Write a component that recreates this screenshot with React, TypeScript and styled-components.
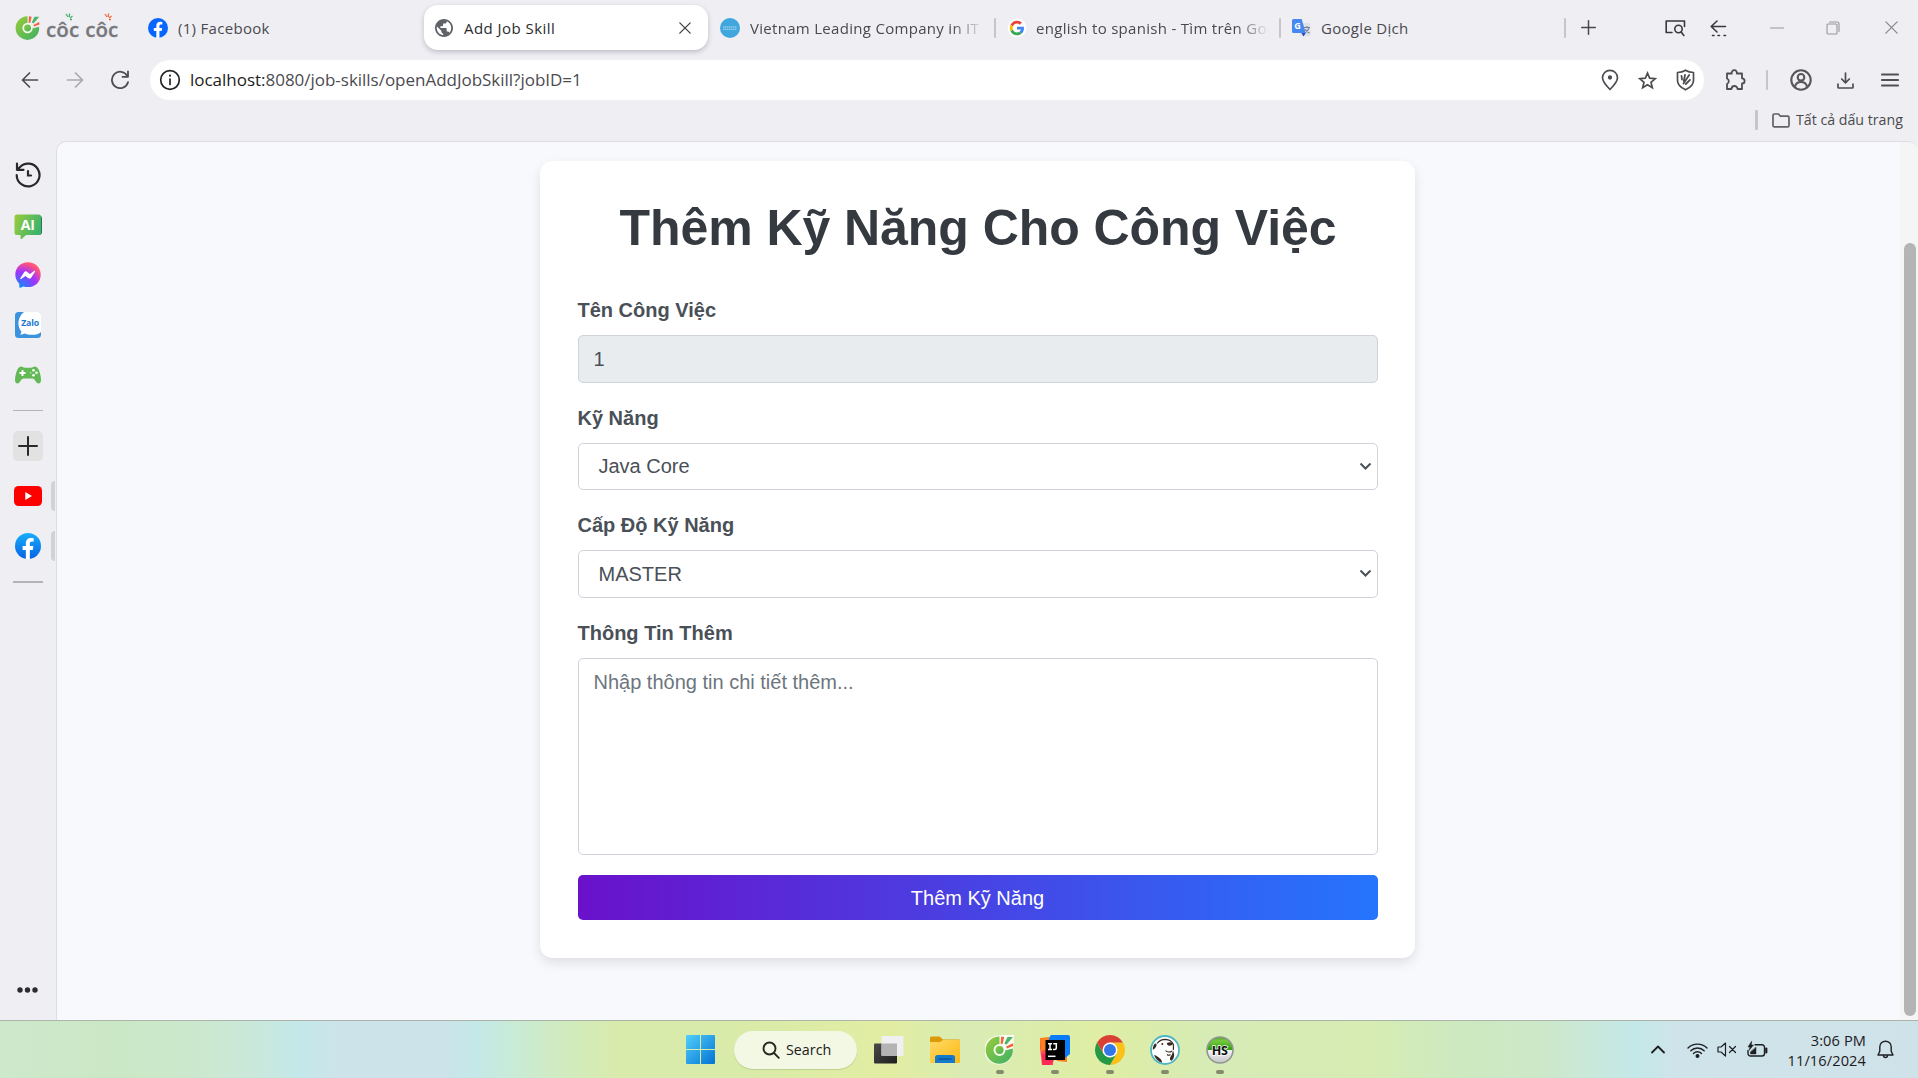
import React from "react";
import styled, { createGlobalStyle } from "styled-components";

const ui = `"Open Sans", "Noto Sans", sans-serif`;
const arial = `"Liberation Sans", Arial, sans-serif`;

const GlobalStyle = createGlobalStyle`
  *, *::before, *::after { box-sizing: border-box; }
  body { margin: 0; background: #efeef3; font-family: ${ui}; overflow: hidden; }
  svg { display: block; flex: none; }
`;

const Screen = styled.div`
  width: 1918px;
  height: 1078px;
  display: flex;
  flex-direction: column;
  overflow: hidden;
`;

const Spacer = styled.div<{ $w?: number }>`
  ${(p) => (p.$w === undefined ? "flex: 1;" : `flex: none; width: ${p.$w}px;`)}
`;

/* ---------- Browser chrome ---------- */

const TabStrip = styled.header`
  flex: none;
  height: 55px;
  display: flex;
  align-items: flex-start;
  padding-top: 5px;
`;

const Brand = styled.div`
  width: 137px;
  height: 45px;
  padding-left: 15px;
  display: flex;
  align-items: center;
`;

const Tab = styled.div<{ $active?: boolean; $width: number }>`
  flex: none;
  width: ${(p) => p.$width}px;
  height: 45px;
  padding: 0 10px 0 11px;
  display: flex;
  align-items: center;
  border-radius: 14px;
  background: ${(p) => (p.$active ? "#fff" : "transparent")};
  box-shadow: ${(p) => (p.$active ? "0 2px 5px rgba(60, 60, 80, 0.28)" : "none")};
`;

const TabTitle = styled.span<{ $space?: number; $active?: boolean; $fade?: boolean; $gap?: number }>`
  flex: 1;
  min-width: 0;
  margin-left: ${(p) => p.$gap ?? 10}px;
  overflow: hidden;
  white-space: nowrap;
  font-size: 15px;
  line-height: 22px;
  letter-spacing: ${(p) => p.$space ?? 0.3}px;
  color: ${(p) => (p.$active ? "#2b2b2e" : "#4a4a4e")};
  ${(p) => p.$fade && "mask-image: linear-gradient(90deg, #000 calc(100% - 32px), transparent);"}
`;

const Divider = styled.div<{ $h?: number; $w?: number }>`
  flex: none;
  width: ${(p) => p.$w ?? 2}px;
  height: ${(p) => p.$h ?? 20}px;
  background: #c5c5ca;
  border-radius: 1px;
`;

const StripTools = styled.div`
  flex: 1;
  height: 45px;
  display: flex;
  align-items: center;
`;

const Toolbar = styled.div`
  flex: none;
  height: 50px;
  display: flex;
  align-items: center;
`;

const AddressBar = styled.div`
  width: 1554px;
  height: 40px;
  padding: 0 9px 0 9px;
  display: flex;
  align-items: center;
  border-radius: 20px;
  background: #fff;
`;

const Url = styled.span`
  margin-left: 9px;
  font-size: 17px;
  line-height: 24px;
  letter-spacing: -0.02px;
  color: #4b4b50;
  white-space: nowrap;
  b { font-weight: 400; color: #1d1d20; }
`;

const BookmarkBar = styled.div`
  flex: none;
  height: 36px;
  padding: 0 14px 6px 0;
  display: flex;
  align-items: center;
  justify-content: flex-end;
`;

const BookmarkLabel = styled.span`
  width: 108px;
  margin-left: 6px;
  font-size: 14.2px;
  line-height: 20px;
  letter-spacing: 0;
  color: #4a4a4e;
  white-space: nowrap;
`;

/* ---------- Sidebar ---------- */

const Body = styled.div`
  flex: 1;
  min-height: 0;
  display: flex;
`;

const Sidebar = styled.nav`
  flex: none;
  width: 56px;
  padding-top: 9px;
  display: flex;
  flex-direction: column;
`;

const SideSlot = styled.div<{ $inset?: number; $drop?: number }>`
  position: relative;
  height: 50px;
  padding-right: ${(p) => p.$inset ?? 0}px;
  padding-top: ${(p) => p.$drop ?? 0}px;
  display: flex;
  align-items: center;
  justify-content: center;
`;

const OpenMark = styled.span`
  position: absolute;
  right: 1px;
  top: 10px;
  width: 4px;
  height: 30px;
  border-radius: 4px 0 0 4px;
  background: #d2d2d4;
`;

const SideRule = styled.div<{ $thick?: number }>`
  height: ${(p) => p.$thick ?? 1}px;
  margin: 10px 13px;
  background: #b4b4b6;
`;

const AddButton = styled.div`
  width: 30px;
  height: 30px;
  display: grid;
  place-items: center;
  border-radius: 5px;
  background: #e2e2e2;
`;

const SideEnd = styled.div`
  margin-top: auto;
  height: 60px;
  padding-left: 17px;
  display: flex;
  align-items: center;
`;

/* ---------- Page ---------- */

const Viewport = styled.main`
  flex: 1;
  min-width: 0;
  display: flex;
  border: 1px solid #dddde2;
  border-right: 0;
  border-bottom: 0;
  border-radius: 10px 10px 0 0;
  background: #f8f9fd;
  overflow: hidden;
`;

const PageArea = styled.div`
  flex: 1;
  padding-top: 19px;
  padding-left: 483px;
`;

const Card = styled.form`
  width: 875px;
  padding: 36.5px 37.5px 38px;
  border-radius: 12.5px;
  background: #fff;
  box-shadow: 0 5px 12px rgba(0, 0, 0, 0.1);
  font-family: ${arial};
`;

const Title = styled.h1`
  margin: 0 0 37.5px;
  padding-left: 1px;
  font-size: 50px;
  line-height: 60px;
  font-weight: 700;
  letter-spacing: -0.06px;
  text-align: center;
  white-space: nowrap;
  color: #343a40;
`;

const Label = styled.label`
  display: block;
  margin-bottom: 10px;
  font-size: 20px;
  line-height: 30px;
  font-weight: 700;
  color: #495057;
`;

const Field = styled.div<{ $disabled?: boolean; $select?: boolean }>`
  height: 47.5px;
  margin-bottom: 20px;
  padding: 0 5px 0 ${(p) => (p.$select ? 20 : 15)}px;
  display: flex;
  align-items: center;
  justify-content: space-between;
  border: 1px solid #ced4da;
  border-radius: 5px;
  background: ${(p) => (p.$disabled ? "#e9ecef" : "#fff")};
  font-size: 20px;
  line-height: 30px;
  color: #495057;
`;

const Notes = styled.textarea`
  display: block;
  width: 100%;
  height: 197px;
  margin: 0 0 20px;
  padding: 8px 15px;
  border: 1px solid #ced4da;
  border-radius: 5px;
  background: #fff;
  resize: none;
  font: 20px/30px ${arial};
  &::placeholder { color: #6c757d; opacity: 1; }
`;

const Submit = styled.button`
  display: block;
  width: 100%;
  height: 45px;
  padding: 1px 6px 0;
  border: 0;
  border-radius: 5px;
  background: linear-gradient(90deg, #6a11cb 0%, #2575fc 100%);
  color: #fff;
  font: 20px/30px ${arial};
`;

const ScrollTrack = styled.div`
  width: 18px;
  padding: 101px 2px 4px 4px;
  background: #f5f5f6;
`;

const ScrollThumb = styled.div`
  height: 100%;
  border-radius: 6px;
  background: #b4b4b5;
`;

/* ---------- Taskbar ---------- */

const Taskbar = styled.footer`
  flex: none;
  height: 58px;
  padding-left: 686px;
  display: flex;
  align-items: center;
  border-top: 1px solid #abb5a9;
  background: linear-gradient(90deg,
    #cde8cb 0, #cbe8c5 120px, #cbe8d0 210px, #c9e8dc 260px, #c3e8ea 300px, #cce4e9 335px,
    #cce3e9 445px, #c3e8e8 475px, #c8ebd8 510px, #d0ebc0 560px, #d9ebab 620px, #d9eba9 740px,
    #e2eda2 890px, #d9ecb4 970px, #dfeea3 1100px, #d6ebb6 1210px, #d6ecb2 1370px, #cde9c0 1460px,
    #cce8c8 1540px, #c9e8da 1590px, #c3e8e8 1635px, #cfe4ea 1675px, #cfe2e9 1918px);
`;

const SearchPill = styled.div`
  width: 123px;
  height: 38px;
  margin: 0 17px 0 19px;
  padding-left: 28px;
  display: flex;
  align-items: center;
  gap: 6px;
  border-radius: 19px;
  background: #f3f8e5;
  box-shadow: 0 1px 1px rgba(100, 120, 60, 0.25);
  font-size: 14.3px;
  color: #202020;
`;

const AppSlot = styled.div<{ $running?: boolean }>`
  position: relative;
  flex: none;
  width: 55px;
  height: 57px;
  display: grid;
  place-items: center;
  &::after {
    content: "";
    display: ${(p) => (p.$running ? "block" : "none")};
    position: absolute;
    left: 23.5px;
    bottom: 4px;
    width: 8px;
    height: 4px;
    border-radius: 2px;
    background: #838b6c;
  }
`;

const Clock = styled.div`
  width: 90px;
  margin-right: 11px;
  text-align: right;
  font-size: 14.6px;
  line-height: 20px;
  letter-spacing: 0.1px;
  white-space: nowrap;
  color: #1c2022;
`;

/* ---------- Icons ---------- */

type LineProps = {
  w: number;
  h?: number;
  box: string;
  color?: string;
  stroke?: number;
  children: React.ReactNode;
};

const Line = ({ w, h, box, color = "#4d4d52", stroke = 1.6, children }: LineProps) => (
  <svg width={w} height={h ?? w} viewBox={box} fill="none" stroke={color} strokeWidth={stroke} strokeLinecap="round" strokeLinejoin="round">
    {children}
  </svg>
);

const CocCocMark = ({ size, outline, id }: { size: number; outline?: boolean; id: string }) => (
  <svg width={size} height={size} viewBox="0 0 30 30">
    <defs>
      <linearGradient id={id} x1="0" y1="0" x2="1" y2="1">
        <stop offset="0" stopColor="#9acb3a" />
        <stop offset="1" stopColor="#3cb166" />
      </linearGradient>
    </defs>
    {outline && (
      <path d="M14 0.5a14.5 14.5 0 1 0 14 17L29 0 17 0z" fill="#fff" opacity="0.85" />
    )}
    <path d="M14.5 1.5A13.6 13.6 0 1 0 27.8 13.5L21 15.2 14.5 9.5z" fill={`url(#${id})`} />
    <circle cx="14.5" cy="15" r="5" fill={`url(#${id})`} stroke="#f5fbe9" strokeWidth="2" />
    <path d="M16.2 1.5l3 .6-1.6 7-2-.4z" fill="#f4633a" />
    <path d="M22.5 2h5.5l-6.6 7.8-2-1.4z" fill="#4db56a" />
    <path d="M27.8 8.2l.5 2.9-6.5 2.3-.6-1.9z" fill="#f4633a" />
  </svg>
);

const Wordmark = styled.span`
  display: flex;
  gap: 6px;
  margin-left: 5px;
  font: 600 20.5px/30px ${ui};
  letter-spacing: 0.1px;
  color: #77787c;
  -webkit-text-stroke: 0.3px #77787c;
`;

const Word = styled.span`
  position: relative;
  transform: translateY(1px);
`;

const Accent = styled.svg`
  position: absolute;
  left: 19px;
  top: -1px;
`;

const CocCocLogo = () => (
  <Brand>
    <CocCocMark size={26} id="cc-logo" />
    <Wordmark>
      {["#3fb56b", "#f2683f"].map((c) => (
        <Word key={c}>
          côc
          <Accent width="8" height="8" viewBox="0 0 8 8" stroke={c} strokeWidth="1.3" fill="none">
            <path d="M1 1l2 3M4.5.5L4.300 4M7.500 3L5 5M7 6.500L5 6.500" />
          </Accent>
        </Word>
      ))}
    </Wordmark>
  </Brand>
);

const FacebookIcon = ({ size, id }: { size: number; id: string }) => (
  <svg width={size} height={size} viewBox="0 0 24 24">
    <defs>
      <linearGradient id={id} x1="0" y1="0" x2="0" y2="1">
        <stop offset="0" stopColor={id === "fb-tab" ? "#0866ff" : "#19aefb"} />
        <stop offset="1" stopColor={id === "fb-tab" ? "#0866ff" : "#0663e2"} />
      </linearGradient>
    </defs>
    <circle cx="12" cy="12" r="12" fill={`url(#${id})`} />
    <path d="M10 23.9v-8.3H7V12h3V9.5c0-3.1 1.8-4.9 4.6-4.9 1 0 2 .1 2.6.3v3h-1.500c-1.600 0-2 .8-2 1.800V12h3.300l-.6 3.600h-2.700v8.300z" fill="#fff" />
  </svg>
);

const GlobeIcon = () => (
  <svg width="18" height="18" viewBox="2 2 20 20">
    <path fill="#5f6368" d="M12 2C6.480 2 2 6.480 2 12s4.480 10 10 10 10-4.480 10-10S17.520 2 12 2zm-1 17.930c-3.950-.49-7-3.850-7-7.930 0-.62.080-1.210.210-1.790L9 15v1c0 1.100.9 2 2 2v1.930zm6.900-2.540c-.26-.81-1-1.390-1.900-1.390h-1v-3c0-.55-.45-1-1-1H8v-2h2c.55 0 1-.45 1-1V7h2c1.100 0 2-.9 2-2v-.41c2.930 1.190 5 4.060 5 7.410 0 2.080-.8 3.970-2.100 5.390z" />
  </svg>
);

const SiteIcon = () => (
  <svg width="20" height="20" viewBox="0 0 20 20">
    <circle cx="10" cy="10" r="10" fill="#3fa7de" />
    <path d="M3 9h14M3 11.300h14" stroke="#b4dcf2" strokeWidth="1.100" strokeDasharray="1.500 .5" />
  </svg>
);

const GoogleIcon = () => (
  <svg width="20" height="20" viewBox="-9 -9 66 66">
    <circle cx="24" cy="24" r="31" fill="#fff" />
    <path fill="#EA4335" d="M24 9.500c3.540 0 6.710 1.220 9.210 3.600l6.850-6.850C35.900 2.380 30.470 0 24 0 14.620 0 6.510 5.380 2.560 13.220l7.980 6.190C12.430 13.720 17.740 9.500 24 9.500z" />
    <path fill="#4285F4" d="M46.980 24.550c0-1.570-.15-3.090-.38-4.550H24v9.020h12.940c-.58 2.960-2.260 5.480-4.780 7.180l7.730 6c4.510-4.180 7.090-10.360 7.090-17.650z" />
    <path fill="#FBBC05" d="M10.530 28.590c-.48-1.450-.76-2.990-.76-4.590s.27-3.140.76-4.590l-7.980-6.190C.92 16.460 0 20.120 0 24s.92 7.540 2.560 10.780l7.970-6.190z" />
    <path fill="#34A853" d="M24 48c6.480 0 11.930-2.130 15.890-5.810l-7.730-6c-2.150 1.450-4.920 2.300-8.160 2.300-6.260 0-11.570-4.220-13.470-9.910l-7.980 6.190C6.510 42.620 14.620 48 24 48z" />
  </svg>
);

const Glyph = styled.text`
  font-family: ${ui};
  font-weight: 700;
`;

const TranslateIcon = () => (
  <svg width="20" height="20" viewBox="0 0 20 20">
    <rect x="8" y="5" width="10.500" height="13" rx="1.500" fill="#dfe1e5" />
    <path d="M12 9.500h6M15 8v1.500M17 9.500c-.5 2.500-2.500 4.500-4.500 5.500M13 11c1 2 2.500 3.200 4.500 4" stroke="#6e8596" strokeWidth="1.100" fill="none" />
    <path d="M1.500 1h8.200l4 14H1.500A1.500 1.500 0 0 1 0 13.500v-11A1.500 1.500 0 0 1 1.500 1z" fill="#4688f1" />
    <path d="M9.500 15h4.200l-2.200 3.500z" fill="#2a49b8" />
    <Glyph x="2.300" y="11" fontSize="9" fill="#fff">G</Glyph>
  </svg>
);

const CloseIcon = ({ size, color }: { size: number; color: string }) => (
  <Line w={size} box="0 0 12 12" color={color} stroke={1.200}>
    <path d="M.8.8l10.400 10.400M11.200.8L.8 11.200" />
  </Line>
);

const PlusIcon = ({ size, stroke, color }: { size: number; stroke: number; color: string }) => (
  <Line w={size} box="0 0 20 20" stroke={stroke} color={color}>
    <path d="M10 1v18M1 10h18" />
  </Line>
);

const ArrowLeft = () => (
  <Line w={18} box="0 0 18 18" stroke={1.700}>
    <path d="M16.500 9H1.500M8.500 2L1.500 9l7 7" />
  </Line>
);

const ArrowRight = () => (
  <Line w={18} box="0 0 18 18" stroke={1.700} color="#a9a9ae">
    <path d="M1.500 9h15M9.500 2l7 7-7 7" />
  </Line>
);

const ReloadIcon = () => (
  <Line w={20} box="0 0 20 20" stroke={1.800}>
    <path d="M18 12.200A8.200 8.200 0 1 1 17.200 5.800M18 1.500v5.300h-5.500" />
  </Line>
);

const InfoIcon = () => (
  <Line w={22} box="0 0 22 22" color="#232326" stroke={1.700}>
    <circle cx="11" cy="11" r="9.300" />
    <path d="M11 10v5.500" />
    <path d="M11 6.500v.2" strokeWidth="2" />
  </Line>
);

const PinIcon = () => (
  <Line w={18} h={22} box="0 0 18 22" stroke={1.700}>
    <path d="M9 20.500C5 16.500 1.500 13 1.500 8.800a7.500 7.500 0 0 1 15 0c0 4.200-3.500 7.700-7.500 11.700z" />
    <circle cx="9" cy="8.500" r="1.300" fill="#4d4d52" />
  </Line>
);

const StarIcon = () => (
  <Line w={19} box="0 0 20 20" stroke={1.800}>
    <path strokeLinejoin="miter" d="M10 2.200l2.300 5.400 5.900.5-4.500 3.900 1.400 5.700L10 14.600l-5.100 3.100 1.400-5.700-4.500-3.900 5.900-.5z" />
  </Line>
);

const ShieldIcon = () => (
  <Line w={19} h={22} box="0 0 19 22" stroke={1.700}>
    <path d="M9.500 1.200C7 3 4 3.500 1.500 3.500v8c0 4 3.500 7.200 8 9.300 4.500-2.100 8-5.300 8-9.300v-8c-2.500 0-5.500-.5-8-2.300z" />
    <path strokeWidth="1.800" d="M5.500 6.800l.5 3.700M9 6l-1.200 6M13.200 6L7.500 14.500M14 10.800l-4.200 4.200" />
  </Line>
);

const PuzzleIcon = () => (
  <Line w={21} h={22} box="0 0 21 22" stroke={1.800}>
    <path d="M2 4.500h4.800a2.600 2.600 0 1 1 5 0H17v4.800a2.600 2.600 0 1 1 0 5.200V20h-4.500a3 3 0 0 0-6 0H2v-5a3 3 0 0 0 0-5.500z" />
  </Line>
);

const ProfileIcon = () => (
  <Line w={22} box="0 0 22 22" stroke={2.100} color="#56565b">
    <circle cx="11" cy="11" r="9.700" />
    <circle cx="11" cy="8.300" r="3.300" />
    <path d="M5 17.500c.8-3.200 3-4.500 6-4.500s5.200 1.300 6 4.500" />
  </Line>
);

const DownloadIcon = () => (
  <Line w={17} h={17} box="0 0 17 17" stroke={1.700}>
    <path d="M8.500 1v9.500M4.700 7l3.800 3.800L12.300 7M1 12v3.200c0 .5.300.8.800.8h13.400c.5 0 .8-.3.800-.8V12" />
  </Line>
);

const MenuIcon = () => (
  <Line w={18} h={14} box="0 0 18 14" stroke={1.800} color="#505055">
    <path d="M.8 1.500h16.400M.8 7h16.400M.8 12.500h16.400" />
  </Line>
);

const TabSearchIcon = () => (
  <Line w={21} h={18} box="0 0 21 18" stroke={1.600} color="#39393d">
    <path d="M7 13.500H1.200V2h18.300v5.500" />
    <circle cx="13.500" cy="10" r="3.700" />
    <path d="M16.200 13l2.600 3.500" />
  </Line>
);

const BackDashIcon = () => (
  <Line w={17} h={18} box="0 0 17 18" stroke={1.600} color="#39393d">
    <path d="M15.500 7.500H1.200M7 2L1.200 7.500 7 13M2.500 16.500h1.500M8 16.500h1.500M14 16.500h1.500" />
  </Line>
);

const MaximizeIcon = () => (
  <Line w={14} h={14} box="0 0 14 14" stroke={1.100} color="#98989c">
    <rect x="1" y="3" width="10" height="10" rx="1" />
    <path d="M3.500 1H11a2 2 0 0 1 2 2v7.500" />
  </Line>
);

const FolderIcon = () => (
  <Line w={18} h={15} box="0 0 18 15" stroke={1.700} color="#616166">
    <path d="M1 2.500C1 1.700 1.500 1 2.300 1h4.200l2 2.200h7.200c.8 0 1.300.6 1.300 1.300v8c0 .8-.5 1.400-1.300 1.400H2.300c-.8 0-1.300-.6-1.300-1.400z" />
  </Line>
);

const HistoryIcon = () => (
  <Line w={26} box="0 0 26 26" stroke={2.200} color="#29292b">
    <path d="M1.700 13.200A11.400 11.400 0 1 0 4.800 5.200L2 7.800M2 1.500v6.300h6.500" />
    <path d="M13 9v4.500h3" strokeLinejoin="miter" />
  </Line>
);

const AiIcon = () => (
  <svg width="28" height="25" viewBox="0 0 28 25">
    <defs>
      <linearGradient id="ai" x1="0" y1="0" x2="1" y2=".4">
        <stop offset="0" stopColor="#9ccc3c" />
        <stop offset="1" stopColor="#3fb36b" />
      </linearGradient>
    </defs>
    <path d="M25 1.500a3 3 0 0 1 3 3V18a3 3 0 0 1-3 3z" fill="#23785a" />
    <path d="M3 .5h21.500a2.500 2.500 0 0 1 2.500 2.500v15.500a2.500 2.500 0 0 1-2.500 2.500H12l-4 3.800c-.8.500-1.500.1-1.500-.8v-3H3A2.500 2.500 0 0 1 .5 18.500V3A2.500 2.500 0 0 1 3 .5z" fill="url(#ai)" />
    <Glyph x="6.700" y="15.500" fontSize="14" fill="#fff">AI</Glyph>
  </svg>
);

const MessengerIcon = () => (
  <svg width="26" height="26" viewBox="0 0 26 26">
    <defs>
      <radialGradient id="msg" cx=".2" cy="1" r="1.150">
        <stop offset="0" stopColor="#0a8cff" />
        <stop offset=".55" stopColor="#a033ff" />
        <stop offset=".85" stopColor="#ff5280" />
        <stop offset="1" stopColor="#ff7061" />
      </radialGradient>
    </defs>
    <path d="M13 .3C5.800.3.300 5.500.300 12.600c0 3.700 1.500 6.900 4 9.100v3.200c0 .6.600 1 1.200.8l2.700-1.200c1.500.4 3.100.6 4.800.6 7.200 0 12.700-5.200 12.700-12.400S20.200.3 13 .3z" fill="url(#msg)" />
    <path d="M5.300 16.200l3.800-6c.6-.9 1.900-1.200 2.800-.5l3 2.200 4.200-2.900c.6-.4 1.300.2.900.8l-3.800 5.900c-.6.900-1.900 1.200-2.800.5l-3-2.200-4.200 3c-.600.400-1.300-.200-.900-.800z" fill="#fff" />
  </svg>
);

const ZaloIcon = () => (
  <svg width="26" height="26" viewBox="0 0 26 26">
    <rect width="26" height="26" rx="3.500" fill="#3b92dd" />
    <path d="M9 0h14a3 3 0 0 1 3 3v17c-3 3.500-12 3.500-16.500 1.500-1.500 1-3 1.300-4.500 1 1-.8 1.500-1.800 1.300-3C1.800 14 2.500 5 9 0z" fill="#fff" />
    <Glyph x="6.200" y="14" fontSize="8.800" letterSpacing="-0.200" fill="#1f78d1">Zalo</Glyph>
  </svg>
);

const GameIcon = () => (
  <svg width="26" height="18" viewBox="0 0 26 18">
    <path d="M6 .5c2 0 2.500 1.300 4 1.300h6c1.500 0 2-1.300 4-1.300 4 0 6 9.500 6 13.500 0 2.300-1 3.500-2.500 3.500-2.500 0-3.500-5-6-5h-9c-2.500 0-3.500 5-6 5C1 17.500 0 16.300 0 14 0 10 2 .5 6 .5z" fill="#62b955" />
    <path d="M7.500 4v6M4.500 7h6" stroke="#fff" strokeWidth="1.900" />
    <circle cx="18.500" cy="4.300" r="1.300" fill="#fff" />
    <circle cx="18.500" cy="9.300" r="1.300" fill="#fff" />
    <circle cx="21.500" cy="6.800" r="1.300" fill="#fff" />
    <circle cx="15.700" cy="6.800" r="1" fill="#a5d89b" />
  </svg>
);

const YoutubeIcon = () => (
  <svg width="28" height="20" viewBox="0 0 28 20">
    <rect width="28" height="20" rx="4.500" fill="#fe0000" />
    <path d="M11.300 6l6.700 4-6.700 4z" fill="#fff" />
  </svg>
);

const DotsIcon = () => (
  <svg width="21" height="6" viewBox="0 0 21 6" fill="#2b2b2d">
    <circle cx="3" cy="3" r="2.700" />
    <circle cx="10.500" cy="3" r="2.700" />
    <circle cx="18" cy="3" r="2.700" />
  </svg>
);

const SelectArrow = () => (
  <Line w={13} h={7} box="0 1 13 7" stroke={2} color="#495057">
    <path strokeLinecap="butt" strokeLinejoin="miter" d="M1.500 1.500l5 5 5-5" />
  </Line>
);

const WindowsIcon = () => (
  <svg width="29" height="29" viewBox="0 0 29 29">
    <defs>
      <linearGradient id="win" x1="0" y1="0" x2="1" y2="1">
        <stop offset="0" stopColor="#52d0fb" />
        <stop offset="1" stopColor="#0372d2" />
      </linearGradient>
    </defs>
    <path fill="url(#win)" d="M1 0h13v14H0V1a1 1 0 0 1 1-1zM15 0h13a1 1 0 0 1 1 1v13H15zM0 15h14v14H1a1 1 0 0 1-1-1zM15 15h14v13a1 1 0 0 1-1 1H15z" />
  </svg>
);

const SearchIcon = () => (
  <Line w={18} box="0 0 18 18" stroke={1.900} color="#26291f">
    <circle cx="7.500" cy="7.500" r="6" />
    <path d="M12 12l4.800 4.800" />
  </Line>
);

const TaskViewIcon = () => (
  <svg width="30" height="29" viewBox="0 0 30 29">
    <defs>
      <linearGradient id="tv" x1="0" y1="0" x2="1" y2="1">
        <stop offset="0" stopColor="#4a4a4a" />
        <stop offset="1" stopColor="#1f1f1f" />
      </linearGradient>
    </defs>
    <rect x="0" y="8.500" width="23" height="20" rx="1" fill="url(#tv)" />
    <rect x="7.500" y="1" width="22" height="20" rx="1" fill="#f0f0f2" />
    <path d="M7.500 8.500H23V21H8.500a1 1 0 0 1-1-1z" fill="#b4b4b4" />
  </svg>
);

const ExplorerIcon = () => (
  <svg width="30" height="28" viewBox="0 0 30 28">
    <defs>
      <linearGradient id="ex" x1="0" y1="0" x2="1" y2="1">
        <stop offset="0" stopColor="#ffd966" />
        <stop offset="1" stopColor="#fdb913" />
      </linearGradient>
    </defs>
    <path d="M0 2a1.500 1.500 0 0 1 1.500-1.500h8L13 3.500h16a1 1 0 0 1 1 1V10H0z" fill="#dd9a08" />
    <path d="M0 6h10l3-2h16a1 1 0 0 1 1 1v21a1 1 0 0 1-1 1H1a1 1 0 0 1-1-1z" fill="url(#ex)" />
    <path d="M5 27v-5.500A2.500 2.500 0 0 1 7.500 19h15a2.500 2.500 0 0 1 2.500 2.500V27z" fill="#1579cc" />
    <path d="M8.500 23h13" stroke="#0a4d8f" strokeWidth="1.200" />
  </svg>
);

const IntellijIcon = () => (
  <svg width="30" height="30" viewBox="0 0 30 30">
    <path d="M0 4l8-1 6 12-1 15H2L0 13z" fill="#fc4a54" />
    <path d="M0 3l9-1 3 8-11 7z" fill="#fc801d" />
    <path d="M2 19h12v6l-4 5H2z" fill="#fe2857" />
    <path d="M15 20h12v7l-10-1z" fill="#fc801d" />
    <path d="M11 0h17a2 2 0 0 1 2 2v17l-5 4-16-12V3z" fill="#087cfa" />
    <rect x="5.500" y="5" width="19.500" height="20" />
    <path d="M8 8.800h4M10 8.800v5.700M8 14.500h4M13.300 8.800h3v4.200c0 1-.6 1.500-1.500 1.500H13" stroke="#fff" strokeWidth="1.500" fill="none" />
    <path d="M8 21.300h7.500" stroke="#fff" strokeWidth="1.500" />
  </svg>
);

const ChromeIcon = () => (
  <svg width="30" height="30" viewBox="0 0 48 48">
    <path d="M24 12h20.780A24 24 0 0 1 24 48l10.400-18z" fill="#fbc116" />
    <path d="M13.600 30L3.220 12A24 24 0 0 0 24 48l10.400-18z" fill="#249a47" />
    <path d="M24 12h20.780A24 24 0 0 0 3.220 12l10.400 18z" fill="#d93f32" />
    <circle cx="24" cy="24" r="12" fill="#fff" />
    <circle cx="24" cy="24" r="9.600" fill="#3277e8" />
  </svg>
);

const DBeaverIcon = () => (
  <svg width="30" height="30" viewBox="0 0 30 30">
    <circle cx="15" cy="15" r="14" fill="#fff" stroke="#4fb7c4" strokeWidth="1.800" />
    <path d="M7 8.500c2-2.800 5-4.200 8.500-4.200 3.500.2 6.500 2 7.800 5 .6 2-.3 3.700.2 5.700" fill="none" stroke="#382923" strokeWidth="1.200" />
    <path d="M4.500 9c-1.500 2-1.800 4-1.600 5.800C4 14.500 6 12.500 6.500 10.500 7 9 5.500 7.800 4.500 9z" fill="#382923" />
    <path d="M4 20c2.500.5 4.500 2 6 3.500 1.500 1.300 2 2.500 2 4.200C8.500 26.800 5.500 24 4 20zM17 8c2-1.200 4.500-1 5.800.8-.3 2-4.300 2.700-5.500 1-.4-.7-.5-1.200-.3-1.800zM23 15.500c1 2.500 2.500 7-1.500 10.300-1.800-.3-2-3-.5-4.800 1.500-1.700 1.300-3.700 2-5.500z" fill="#382923" />
    <circle cx="12.300" cy="9" r="1" fill="#382923" />
    <path d="M15.500 15.500c1.500 2 4.500 2 6.500.5M17 19.500c1 .8 2.500.8 3.500 0" stroke="#382923" strokeWidth="1.100" fill="none" />
  </svg>
);

const HeidiIcon = () => (
  <svg width="28" height="28" viewBox="0 0 28 28">
    <defs>
      <linearGradient id="hs" x1="0" y1="0" x2="0" y2="1">
        <stop offset="0" stopColor="#53a52b" />
        <stop offset=".15" stopColor="#74c93d" />
        <stop offset=".5" stopColor="#2f9a12" />
        <stop offset=".51" stopColor="#f4f4f4" />
        <stop offset="1" stopColor="#c4c4c4" />
      </linearGradient>
    </defs>
    <circle cx="14" cy="14" r="13" fill="url(#hs)" stroke="#8f9690" strokeWidth="1.600" />
    <Glyph x="5.700" y="18.600" fontSize="12.500" letterSpacing="-0.300" stroke="#fff" strokeWidth="1.300" paintOrder="stroke" fill="#111">HS</Glyph>
  </svg>
);

const TrayChevron = () => (
  <Line w={14} h={9} box="0 0 14 9" stroke={1.800} color="#1c2022">
    <path d="M1 7.500l6-6 6 6" />
  </Line>
);

const WifiIcon = () => (
  <Line w={21} h={16} box="0 0 21 16" stroke={1.400} color="#1c2022">
    <path d="M1 6a13.500 13.500 0 0 1 19 0M3.800 8.700a9.600 9.600 0 0 1 13.400 0M6.500 11.400a5.700 5.700 0 0 1 8 0" />
    <circle cx="10.500" cy="14" r="1.300" fill="#1c2022" />
  </Line>
);

const MuteIcon = () => (
  <Line w={20} h={15} box="0 0 20 15" stroke={1.200} color="#1c2022">
    <path d="M1 5v5h3l4.500 4V1L4 5zM12.500 4.500l6 6M18.500 4.500l-6 6" />
  </Line>
);

const BatteryIcon = () => (
  <Line w={21} h={17} box="0 0 21 17" stroke={1.400} color="#1c2022">
    <path d="M8 3.800H15a2.500 2.500 0 0 1 2.500 2.500v6.200a2.500 2.500 0 0 1-2.500 2.500H3.500A2.500 2.500 0 0 1 1 12.500V9.500" />
    <path d="M19.300 7.500v4" strokeWidth="2.200" />
    <path d="M9 6.500v6.500H3.500V11z" fill="#1c2022" strokeWidth=".5" />
    <path d="M4.500 .5L1 6h2L2 9.500 6.500 4H4.500z" fill="#1c2022" strokeWidth=".5" />
  </Line>
);

const BellIcon = () => (
  <Line w={17} h={19} box="0 0 17 19" stroke={1.400} color="#1c2022">
    <path d="M8.500 1.200a5.700 5.700 0 0 0-5.700 5.700v4.300L1 15h15l-1.800-3.800V6.900a5.700 5.700 0 0 0-5.700-5.700zM6.500 15.500a2 2 0 0 0 4 0" />
  </Line>
);

/* ---------- App ---------- */

const BrowserHeader = () => (
  <>
    <TabStrip>
      <CocCocLogo />
      <Tab $width={287}>
        <FacebookIcon size={20} id="fb-tab" />
        <TabTitle>(1) Facebook</TabTitle>
      </Tab>
      <Tab $active $width={284}>
        <GlobeIcon />
        <TabTitle $active $gap={11} $space={0.45}>Add Job Skill</TabTitle>
        <CloseIcon size={12} color="#39393d" />
        <Spacer $w={7} />
      </Tab>
      <Tab $width={286}>
        <Spacer $w={1} />
        <SiteIcon />
        <TabTitle $fade>Vietnam Leading Company in IT</TabTitle>
      </Tab>
      <StripTools>
        <Divider />
        <Tab $width={283}>
          <GoogleIcon />
          <TabTitle $fade $gap={9}>english to spanish - Tìm trên Google</TabTitle>
        </Tab>
        <Divider />
        <Tab $width={283}>
          <TranslateIcon />
          <TabTitle $gap={9}>Google Dịch</TabTitle>
        </Tab>
        <Divider />
        <Spacer $w={15} />
        <PlusIcon size={15} stroke={2} color="#48484c" />
        <Spacer />
        <TabSearchIcon />
        <Spacer $w={24} />
        <BackDashIcon />
        <Spacer $w={43} />
        <Line w={14} h={2} box="0 0 14 2" stroke={1.200} color="#98989c"><path d="M.5 1h13" /></Line>
        <Spacer $w={42} />
        <MaximizeIcon />
        <Spacer $w={45} />
        <CloseIcon size={13} color="#88888c" />
        <Spacer $w={20} />
      </StripTools>
    </TabStrip>
    <Toolbar>
      <Spacer $w={21} />
      <ArrowLeft />
      <Spacer $w={27} />
      <ArrowRight />
      <Spacer $w={26} />
      <ReloadIcon />
      <Spacer $w={20} />
      <AddressBar>
        <InfoIcon />
        <Url><b>localhost:</b>8080/job-skills/openAddJobSkill?jobID=1</Url>
        <Spacer />
        <PinIcon />
        <Spacer $w={19} />
        <StarIcon />
        <Spacer $w={19} />
        <ShieldIcon />
      </AddressBar>
      <Spacer $w={21} />
      <PuzzleIcon />
      <Spacer $w={20} />
      <Divider />
      <Spacer $w={22} />
      <ProfileIcon />
      <Spacer $w={25} />
      <DownloadIcon />
      <Spacer $w={27} />
      <MenuIcon />
    </Toolbar>
    <BookmarkBar>
      <Divider $w={3} />
      <Spacer $w={14} />
      <FolderIcon />
      <BookmarkLabel>Tất cả dấu trang</BookmarkLabel>
    </BookmarkBar>
  </>
);

const SideNav = () => (
  <Sidebar>
    <SideSlot $inset={1}><HistoryIcon /></SideSlot>
    <SideSlot $drop={2}><AiIcon /></SideSlot>
    <SideSlot><MessengerIcon /></SideSlot>
    <SideSlot><ZaloIcon /></SideSlot>
    <SideSlot><GameIcon /></SideSlot>
    <SideRule />
    <SideSlot $inset={1}>
      <AddButton><PlusIcon size={20} stroke={2} color="#29292b" /></AddButton>
    </SideSlot>
    <SideSlot><YoutubeIcon /><OpenMark /></SideSlot>
    <SideSlot><FacebookIcon size={26} id="fb-side" /><OpenMark /></SideSlot>
    <SideRule $thick={2} />
    <SideEnd><DotsIcon /></SideEnd>
  </Sidebar>
);

const SkillForm = () => (
  <Card>
    <Title>Thêm Kỹ Năng Cho Công Việc</Title>
    <Label>Tên Công Việc</Label>
    <Field $disabled>1</Field>
    <Label>Kỹ Năng</Label>
    <Field $select>Java Core<SelectArrow /></Field>
    <Label>Cấp Độ Kỹ Năng</Label>
    <Field $select>MASTER<SelectArrow /></Field>
    <Label>Thông Tin Thêm</Label>
    <Notes placeholder="Nhập thông tin chi tiết thêm..." />
    <Submit type="button">Thêm Kỹ Năng</Submit>
  </Card>
);

const SystemTaskbar = () => (
  <Taskbar>
    <WindowsIcon />
    <SearchPill><SearchIcon />Search</SearchPill>
    <TaskViewIcon />
    <Spacer $w={13} />
    <AppSlot><ExplorerIcon /></AppSlot>
    <AppSlot $running><CocCocMark size={30} outline id="cc-task" /></AppSlot>
    <AppSlot $running><IntellijIcon /></AppSlot>
    <AppSlot $running><ChromeIcon /></AppSlot>
    <AppSlot $running><DBeaverIcon /></AppSlot>
    <AppSlot $running><HeidiIcon /></AppSlot>
    <Spacer />
    <TrayChevron />
    <Spacer $w={22} />
    <WifiIcon />
    <Spacer $w={9} />
    <MuteIcon />
    <Spacer $w={10} />
    <BatteryIcon />
    <Spacer $w={8} />
    <Clock>3:06 PM<br />11/16/2024</Clock>
    <BellIcon />
    <Spacer $w={24} />
  </Taskbar>
);

export default function App() {
  return (
    <Screen>
      <GlobalStyle />
      <BrowserHeader />
      <Body>
        <SideNav />
        <Viewport>
          <PageArea><SkillForm /></PageArea>
          <ScrollTrack><ScrollThumb /></ScrollTrack>
        </Viewport>
      </Body>
      <SystemTaskbar />
    </Screen>
  );
}
